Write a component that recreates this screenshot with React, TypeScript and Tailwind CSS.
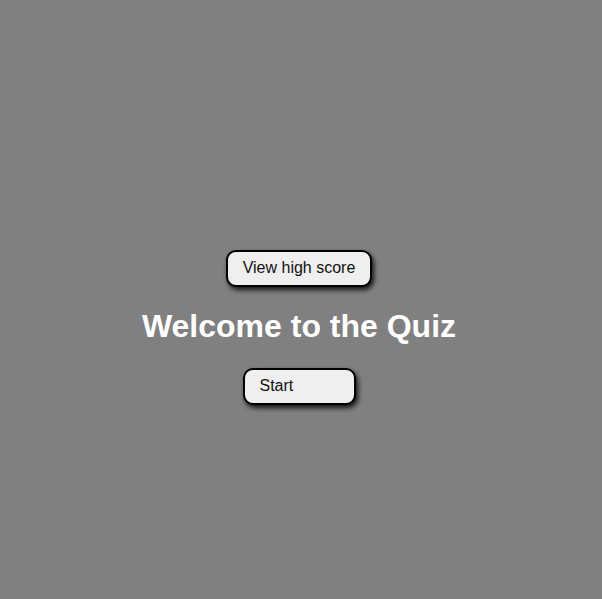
export default function App() {
  return (
    <div
      className="min-h-[599px] w-full bg-[#808080] flex flex-col items-center pt-[250px] pr-[4px]"
      style={{ fontFamily: '"Liberation Sans", Arial, sans-serif' }}
    >
      <button className="h-[37px] px-[15px] pb-[2px] border-2 border-black rounded-[10px] bg-[#efefef] text-[16px] text-[#111] shadow-[2px_3px_5px_rgba(0,0,0,0.85)]">
        View high score
      </button>
      <h1 className="mt-[21px] mb-[23px] text-[32px] font-bold text-white leading-[37px]">
        Welcome to the Quiz
      </h1>
      <button className="h-[37px] w-[113px] px-[15px] pb-[2px] text-left border-2 border-black rounded-[10px] bg-[#efefef] text-[16px] text-[#111] shadow-[2px_3px_5px_rgba(0,0,0,0.85)]">
        Start
      </button>
    </div>
  );
}
